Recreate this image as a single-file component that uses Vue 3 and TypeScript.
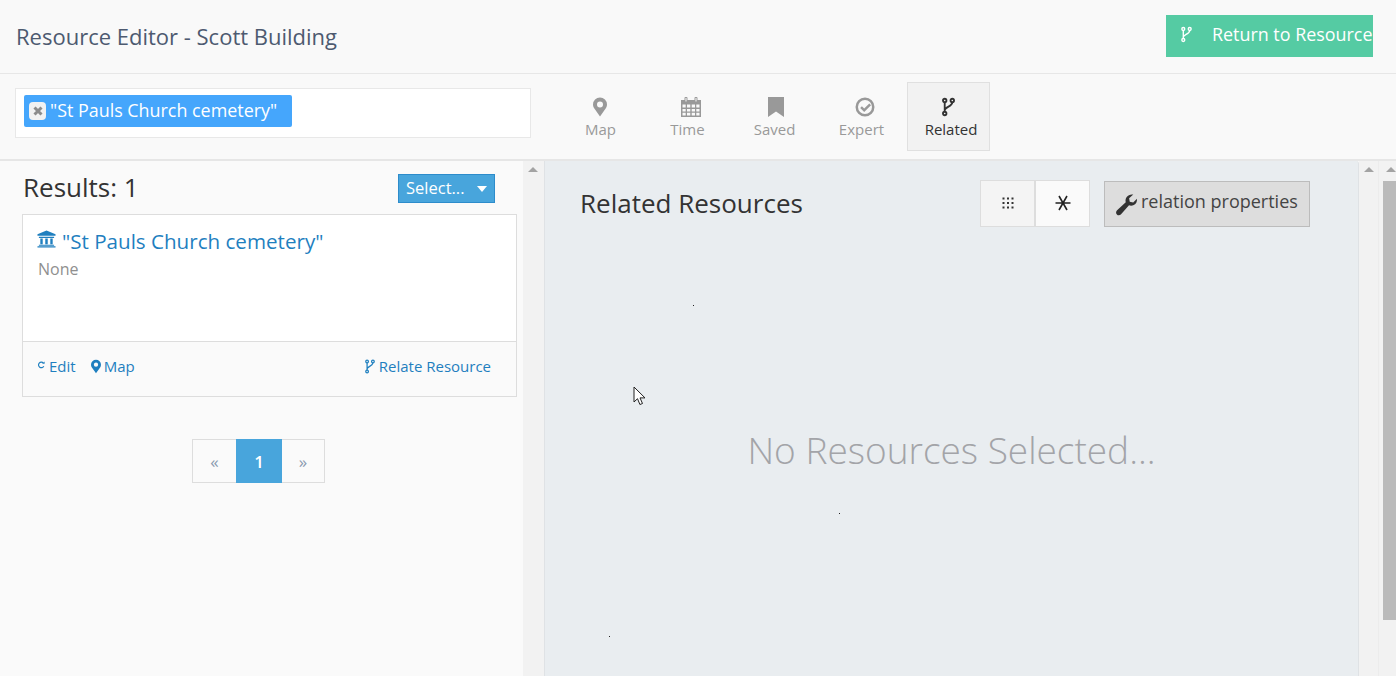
<script setup lang="ts">
import { ref } from 'vue'

defineOptions({
  name: 'ResourceEditor',
})

interface Tab {
  key: string
  label: string
}

const tabs: Tab[] = [
  { key: 'map', label: 'Map' },
  { key: 'time', label: 'Time' },
  { key: 'saved', label: 'Saved' },
  { key: 'expert', label: 'Expert' },
  { key: 'related', label: 'Related' },
]

const activeTab = ref('related')
const resourceName = '"St Pauls Church cemetery"'

// 图上的几个小节点
const graphDots = [
  { x: 148, y: 144 },
  { x: 294, y: 352 },
  { x: 64, y: 475 },
]
</script>

<template>
  <div class="page">
    <header class="top-bar">
      <h1 class="page-title">Resource Editor - Scott Building</h1>
      <button class="return-btn">
        <svg class="fork-icon" viewBox="0 0 12 18"><path d="M2.500 4.500v9M9.500 4.500c0 4-7 4.500-7 7.500" /><circle cx="2.500" cy="3" r="1.600" /><circle cx="9.500" cy="3" r="1.600" /><circle cx="2.500" cy="15" r="1.600" /></svg>
        <span>Return to Resource</span>
      </button>
    </header>

    <section class="tool-bar">
      <div class="search-box">
        <span class="tag">
          <span class="tag-close"><svg viewBox="0 0 12 12"><path d="M2.500 2.500l7 7M9.500 2.500l-7 7" /></svg></span>
          <span>{{ resourceName }}</span>
        </span>
      </div>
      <nav class="tabs">
        <div v-for="tab in tabs" :key="tab.key" class="tab" :class="[`tab-${tab.key}`, { active: tab.key === activeTab }]">
          <svg v-if="tab.key === 'map'" class="tab-icon" viewBox="0 0 20 20"><path fill-rule="evenodd" d="M10 .5a7 7 0 0 0-7 7c0 1.500.5 2.500 1 3.500L10 19.500l6-8.500c.5-1 1-2 1-3.500a7 7 0 0 0-7-7zm0 4a3 3 0 1 1 0 6 3 3 0 0 1 0-6z" /></svg>
          <svg v-else-if="tab.key === 'time'" class="tab-icon" viewBox="0 0 20 20"><path fill-rule="evenodd" d="M0 3h3.500V.8c0-1 3-1 3 0V3h7V.8c0-1 3-1 3 0V3H20v17H0zM4.500 1v3.500h1V1zm10 0v3.500h1V1zM1.500 7.500v3h3.200v-3zm4.500 0v3h3.300v-3zm4.700 0v3H14v-3zm4.600 0v3h3.200v-3zM1.500 12v2.500h3.200V12zm4.500 0v2.500h3.300V12zm4.700 0v2.500H14V12zm4.600 0v2.500h3.200V12zM1.500 15.800v2.700h3.200v-2.700zm4.500 0v2.700h3.300v-2.700zm4.700 0v2.700H14v-2.700zm4.600 0v2.700h3.200v-2.700z" /></svg>
          <svg v-else-if="tab.key === 'saved'" class="tab-icon" viewBox="0 0 20 20"><path d="M2 0h16v20l-8-5.500L2 20z" /></svg>
          <svg v-else-if="tab.key === 'expert'" class="tab-icon" viewBox="0 0 20 20"><path fill-rule="evenodd" d="M10 .5a9.500 9.500 0 1 1 0 19 9.500 9.500 0 0 1 0-19zm0 2.500a7 7 0 1 0 0 14 7 7 0 0 0 0-14zm4.300 3.500l1.700 1.700-6.800 6.800-4-4 1.700-1.700 2.300 2.300z" /></svg>
          <svg v-else class="tab-icon fork-icon dark" viewBox="0 0 12 18"><path d="M2.500 4.500v9M9.500 4.500c0 4-7 4.500-7 7.500" /><circle cx="2.500" cy="3" r="1.600" /><circle cx="9.500" cy="3" r="1.600" /><circle cx="2.500" cy="15" r="1.600" /></svg>
          <span class="tab-label">{{ tab.label }}</span>
        </div>
      </nav>
    </section>

    <div class="content">
      <aside class="results">
        <div class="results-head">
          <h2 class="results-title">Results: 1</h2>
          <button class="select-btn">Select... <span class="caret" /></button>
        </div>
        <article class="card">
          <div class="card-body">
            <a class="card-title">
              <svg class="bank-icon" viewBox="0 0 20 18"><path d="M10 0l9.500 4v1.500H.5V4zM2 6.500h16V8H2zM3.500 8.500h2.500v6H3.500zM8.700 8.500h2.600v6H8.700zM14 8.500h2.500v6H14zM2 15h16v1H2zM.5 16.500h19V18H.5z" /></svg>
              {{ resourceName }}
            </a>
            <p class="card-desc">None</p>
          </div>
          <footer class="card-foot">
            <a class="card-link">
              <svg class="link-icon small" viewBox="0 0 10 10"><path d="M8 2.500A3.500 3.500 0 1 0 8.500 6.500" /><path class="solid" d="M6.500 3.500h3v-3z" /></svg>
              Edit
            </a>
            <a class="card-link map-link">
              <svg class="link-icon pin" viewBox="3 0 14 20"><path fill-rule="evenodd" d="M10 .5a7 7 0 0 0-7 7c0 1.500.5 2.500 1 3.500L10 19.500l6-8.500c.5-1 1-2 1-3.500a7 7 0 0 0-7-7zm0 4a3 3 0 1 1 0 6 3 3 0 0 1 0-6z" /></svg>
              Map
            </a>
            <a class="card-link push">
              <svg class="link-icon fork-icon blue" viewBox="0 0 12 18"><path d="M2.500 4.500v9M9.500 4.500c0 4-7 4.500-7 7.500" /><circle cx="2.500" cy="3" r="1.600" /><circle cx="9.500" cy="3" r="1.600" /><circle cx="2.500" cy="15" r="1.600" /></svg>
              Relate Resource
            </a>
          </footer>
        </article>
        <div class="pagination">
          <span class="page-item">«</span>
          <span class="page-item current">1</span>
          <span class="page-item">»</span>
        </div>
      </aside>

      <div class="scroll-track first"><span class="arrow" /></div>

      <main class="related">
        <div class="related-head">
          <h2 class="related-title">Related Resources</h2>
          <div class="view-group">
            <button class="view-btn grid-btn">
              <svg viewBox="0 0 12 12"><g><rect v-for="n in 9" :key="n" :x="(n - 1) % 3 * 4.500 + .5" :y="Math.floor((n - 1) / 3) * 4.500 + .5" width="2" height="2" /></g></svg>
            </button>
            <button class="view-btn star-btn">
              <svg viewBox="0 0 16 16"><path d="M.5 8h15M4 1l8 14M12 1L4 15" /></svg>
            </button>
          </div>
          <button class="props-btn">
            <svg class="wrench" viewBox="0 0 22 22"><path d="M21 5.500c.3 2.500-.7 4.800-3 6-1.700.8-3.300.7-4.600.3L5.800 20.400c-1.200 1.200-3 1.200-4 .1-1.100-1.100-1-2.800.2-4l8.300-7.600C9.800 7.400 10 5.500 11.200 3.800 12.700 1.800 15 1 17.500 1.500l-4 3.600.6 3.300 3.300.7z" /></svg>
            relation properties
          </button>
        </div>
        <p class="empty-text">No Resources Selected...</p>
        <i v-for="(dot, i) in graphDots" :key="i" class="dot" :style="{ left: `${dot.x}px`, top: `${dot.y}px` }" />
      </main>

      <div class="scroll-track second"><span class="arrow" /></div>
      <div class="scroll-track third"><span class="arrow" /><div class="thumb" /></div>
    </div>

    <svg class="cursor" viewBox="0 0 13 20"><path d="M1 1v15l3.500-3.300 2.400 5.800 2.600-1-2.500-5.600H12z" /></svg>
  </div>
</template>

<style>
html, body {
  margin: 0;
  background: #f9f9f9;
}
</style>

<style scoped>
.page {
  position: relative;
  display: flex;
  flex-direction: column;
  width: 1396px;
  height: 676px;
  overflow: hidden;
  background: #f9f9f9;
  font-family: "Open Sans", "Noto Sans", sans-serif;
  font-size: 14px;
  color: #333;
}

button {
  font-family: inherit;
  cursor: pointer;
}

.top-bar {
  display: flex;
  flex: none;
  align-items: flex-start;
  justify-content: space-between;
  box-sizing: border-box;
  height: 74px;
  padding: 15px 23px 0 16px;
  border-bottom: 1px solid #e7e7e7;
}

.page-title {
  margin: 5px 0 0;
  font-size: 22px;
  font-weight: 400;
  line-height: 32px;
  color: #4d5a70;
}

.return-btn {
  display: flex;
  align-items: center;
  width: 207px;
  height: 42px;
  padding: 0 0 4px 15px;
  border: 0;
  background: #55cba3;
  font-size: 17.900px;
  color: #fff;
  white-space: nowrap;
}

.return-btn .fork-icon {
  width: 11px;
  height: 17px;
  margin-right: 20px;
  stroke: #fff;
}

.fork-icon {
  fill: none;
  stroke-width: 1.500;
}

.fork-icon.dark {
  stroke: #333;
  stroke-width: 1.700;
}

.fork-icon.blue {
  stroke: #1f7fbf;
}

.tool-bar {
  display: flex;
  flex: none;
  box-sizing: border-box;
  height: 87px;
  padding: 8px 0 0 15px;
  border-bottom: 2px solid #e6e6e6;
}

.search-box {
  flex: none;
  box-sizing: border-box;
  width: 516px;
  height: 50px;
  margin-top: 6px;
  padding: 6px 8px;
  border: 1px solid #e8e8e8;
  background: #fff;
}

.tag {
  display: flex;
  align-items: center;
  gap: 4px;
  box-sizing: border-box;
  width: 268px;
  height: 32px;
  padding: 0 0 2px 5px;
  border-radius: 2px;
  background: #45a6fc;
  font-size: 17.900px;
  color: #fff;
}

.tag-close {
  display: flex;
  align-items: center;
  justify-content: center;
  width: 17px;
  height: 18px;
  margin-top: 2px;
  border-radius: 4px;
  background: #f2f2f2;
}

.tag-close svg {
  width: 12px;
  height: 12px;
  fill: none;
  stroke: #8c8c8c;
  stroke-width: 3;
}

.tabs {
  display: flex;
  gap: 4px;
  margin-left: 28px;
}

.tab {
  display: flex;
  flex-direction: column;
  align-items: center;
  box-sizing: border-box;
  width: 83px;
  height: 69px;
  padding-top: 14px;
  border: 1px solid transparent;
  font-size: 15px;
  color: #999;
}

.tab.active {
  padding-left: 5px;
  border-color: #e0e0e0;
  background: #f2f2f2;
  color: #333;
}

.tab-icon {
  flex: none;
  width: 20px;
  height: 20px;
  fill: #999;
}

.tab-map .tab-icon {
  margin-left: -2px;
}

.tab-time .tab-icon,
.tab-expert .tab-icon {
  margin-left: 6px;
}

.tab-saved .tab-icon {
  margin-left: 2px;
}

.tab-related .tab-icon {
  margin-left: -5px;
}

.tab-icon.fork-icon {
  width: 13px;
  fill: none;
}

.tab-label {
  margin-top: 2px;
  line-height: 20px;
}

.content {
  display: flex;
  flex: 1;
  min-height: 0;
}

.results {
  flex: none;
  box-sizing: border-box;
  width: 523px;
  padding: 0 6px 0 22px;
  background: #fafafa;
}

.results-head {
  display: flex;
  align-items: center;
  justify-content: space-between;
  height: 53px;
  padding: 0 22px 0 1px;
}

.results-title {
  margin: -1px 0 0;
  font-size: 26px;
  font-weight: 400;
  color: #333;
}

.select-btn {
  width: 97px;
  height: 29px;
  margin-top: 2px;
  padding: 0 0 2px 7px;
  border: 1px solid #2d8ccb;
  background: #48a5dc;
  font-size: 16.500px;
  color: #fff;
  text-align: left;
  white-space: nowrap;
}

.caret {
  display: inline-block;
  margin-left: 8px;
  border-top: 6px solid #fff;
  border-right: 5.500px solid transparent;
  border-left: 5.500px solid transparent;
  vertical-align: 2px;
}

.card {
  box-sizing: border-box;
  height: 183px;
  border: 1px solid #ddd;
}

.card-body {
  box-sizing: border-box;
  height: 127px;
  padding: 11px 14px;
  border-bottom: 1px solid #ddd;
  background: #fff;
}

.card-title {
  display: flex;
  align-items: center;
  gap: 6px;
  font-size: 20.600px;
  line-height: 30px;
  color: #1f7fbf;
}

.bank-icon {
  width: 19px;
  height: 18px;
  margin-top: -4px;
  fill: #1f7fbf;
}

.card-desc {
  margin: 3px 0 0 1px;
  font-size: 16px;
  line-height: 20px;
  color: #8f8f8f;
}

.card-foot {
  display: flex;
  align-items: center;
  gap: 15px;
  height: 48px;
  padding: 0 25px 0 14px;
  font-size: 15px;
}

.card-link {
  display: flex;
  align-items: center;
  gap: 4px;
  color: #1f7fbf;
}

.card-link.map-link {
  gap: 3px;
}

.card-link.push {
  margin-left: auto;
}

.link-icon {
  width: 10px;
  height: 15px;
  fill: #1f7fbf;
}

.link-icon.small {
  width: 8px;
  height: 8px;
  margin-top: -3px;
  fill: none;
  stroke: #1f7fbf;
  stroke-width: 1.500;
}

.link-icon .solid {
  fill: #1f7fbf;
  stroke: none;
}

.link-icon.fork-icon {
  fill: none;
}

.link-icon.pin {
  width: 10px;
  height: 15px;
}

.pagination {
  display: flex;
  justify-content: center;
  margin: 42px 22px 0 0;
}

.page-item {
  display: flex;
  align-items: center;
  justify-content: center;
  box-sizing: border-box;
  width: 44px;
  height: 44px;
  border: 1px solid #ddd;
  background: #fafafa;
  font-size: 17px;
  color: #8a9bb0;
}

.page-item:first-child {
  border-right: 0;
}

.page-item:last-child {
  width: 43px;
  border-left: 0;
}

.page-item.current {
  width: 46px;
  border-color: #48a5dc;
  background: #48a5dc;
  font-weight: 600;
  color: #fff;
}

.scroll-track {
  position: relative;
  flex: none;
  background: #f2f2f2;
}

.scroll-track.first {
  width: 21px;
}

.scroll-track.second {
  width: 20px;
  border-right: 1px solid #ececec;
  box-sizing: border-box;
}

.scroll-track.third {
  width: 18px;
}

.arrow {
  position: absolute;
  top: 6px;
  left: 5px;
  border-right: 5px solid transparent;
  border-bottom: 5px solid #a3a3a3;
  border-left: 5px solid transparent;
}

.third .arrow {
  left: 7px;
}

.thumb {
  position: absolute;
  top: 20px;
  right: 0;
  width: 14px;
  height: 439px;
  background: #bababa;
}

.related {
  position: relative;
  flex: none;
  box-sizing: border-box;
  width: 815px;
  border-right: 1px solid #dfe2e5;
  border-left: 1px solid #dfe2e5;
  border-top-right-radius: 3px;
  background: #e9edf0;
}

.related-head {
  display: flex;
  align-items: center;
  height: 85px;
  padding: 0 0 0 35px;
}

.related-title {
  width: 400px;
  margin: -2px 0 0;
  font-size: 26px;
  font-weight: 400;
  color: #333;
}

.view-group {
  display: flex;
  margin-top: -1px;
}

.view-btn {
  display: flex;
  align-items: center;
  justify-content: center;
  box-sizing: border-box;
  width: 55px;
  height: 47px;
  padding: 0;
  border: 1px solid #ddd;
  background: #f4f4f4;
}

.star-btn {
  background: #fafafa;
}

.grid-btn svg {
  width: 12px;
  height: 12px;
  fill: #333;
}

.star-btn svg {
  width: 16px;
  height: 16px;
  fill: none;
  stroke: #222;
  stroke-width: 1.600;
}

.props-btn {
  display: flex;
  align-items: center;
  gap: 3px;
  box-sizing: border-box;
  width: 206px;
  height: 46px;
  margin: 1px 0 0 14px;
  padding: 0 0 6px 10px;
  border: 1px solid #bcbcbc;
  background: #dddddd;
  font-size: 18px;
  color: #444;
  white-space: nowrap;
}

.wrench {
  width: 23px;
  height: 23px;
  margin-top: 6px;
  fill: #333;
}

.empty-text {
  margin: 179px 0 0;
  font-size: 37px;
  font-weight: 300;
  line-height: 50px;
  color: #a3a4a8;
  text-align: center;
}

.dot {
  position: absolute;
  width: 1px;
  height: 1px;
  background: #222;
}

.cursor {
  position: absolute;
  top: 386px;
  left: 633px;
  width: 13px;
  height: 20px;
  fill: #fff;
  stroke: #222;
  stroke-width: 1;
}
</style>
